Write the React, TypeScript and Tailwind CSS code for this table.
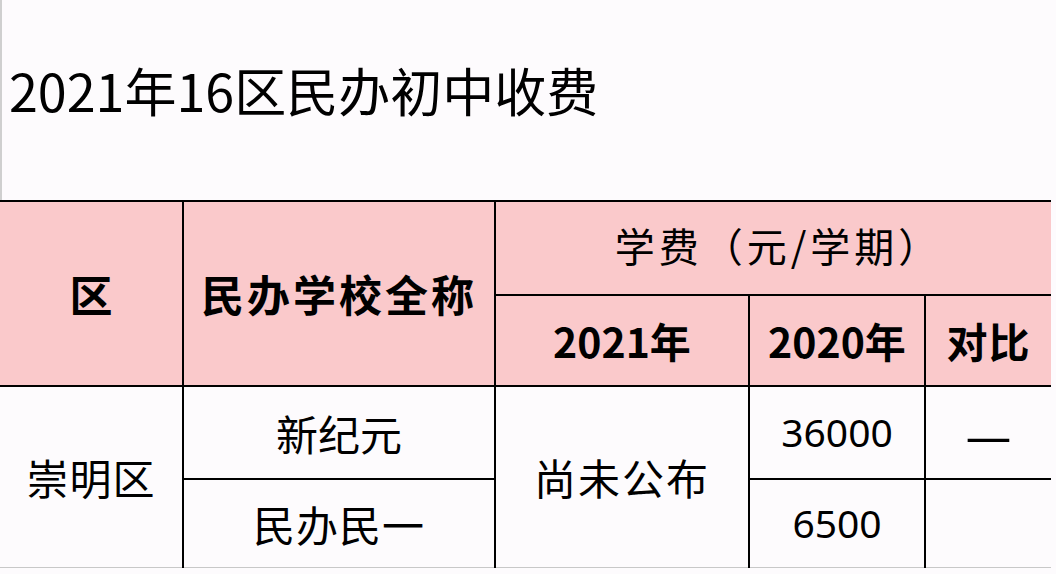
const font = "font-['Noto_Sans_CJK_SC','Noto_Sans',sans-serif]";

const line = "border-black border-[2px]";

export default function App() {
  return (
    <div className={`w-[1056px] h-[574px] bg-[#fdfbfd] text-black overflow-hidden ${font}`}>
      <div className="h-[200px] border-l-2 border-[#cfcfcf] flex items-center pl-[7px] pb-[20px]">
        <h1 className="text-[52px] leading-none font-normal">2021年16区民办初中收费</h1>
      </div>
      <table className="w-[1051px] table-fixed border-collapse">
        <colgroup>
          <col className="w-[183px]" />
          <col className="w-[312px]" />
          <col className="w-[254px]" />
          <col className="w-[176px]" />
          <col />
        </colgroup>
        <thead className="bg-[#fac9cb]">
          <tr className="h-[94px]">
            <th rowSpan={2} className={`${line} border-l-0 text-[43px] font-bold`}>区</th>
            <th rowSpan={2} className={`${line} text-[43px] font-bold tracking-[3px]`}>民办学校全称</th>
            <th colSpan={3} className={`${line} border-r-0 text-[40px] font-normal tracking-[4px] pb-[6px] pl-[10px]`}>学费（元/学期）</th>
          </tr>
          <tr className="h-[91px]">
            <th className={`${line} text-[41px] font-bold`}>2021年</th>
            <th className={`${line} text-[41px] font-bold`}>2020年</th>
            <th className={`${line} border-r-0 text-[41px] font-bold tracking-[1px]`}>对比</th>
          </tr>
        </thead>
        <tbody>
          <tr className="h-[93px]">
            <td rowSpan={2} className={`${line} border-l-0 border-b-[#c8c8c8] border-b text-center text-[42px] tracking-[1px]`}>崇明区</td>
            <td className={`${line} text-center text-[42px]`}>新纪元</td>
            <td rowSpan={2} className={`${line} border-b-[#c8c8c8] border-b text-center text-[42px] tracking-[2px]`}>尚未公布</td>
            <td className={`${line} text-center text-[39px] font-['Noto_Sans',sans-serif]`}>36000</td>
            <td className={`${line} border-r-0 text-center text-[52px] leading-none`}>—</td>
          </tr>
          <tr className="h-[88px]">
            <td className={`${line} border-b-[#c8c8c8] border-b text-center text-[42px] tracking-[1px]`}>民办民一</td>
            <td className={`${line} border-b-[#c8c8c8] border-b text-center text-[39px] font-['Noto_Sans',sans-serif]`}>6500</td>
            <td className={`${line} border-r-0 border-b-[#c8c8c8] border-b`}></td>
          </tr>
        </tbody>
      </table>
    </div>
  );
}
